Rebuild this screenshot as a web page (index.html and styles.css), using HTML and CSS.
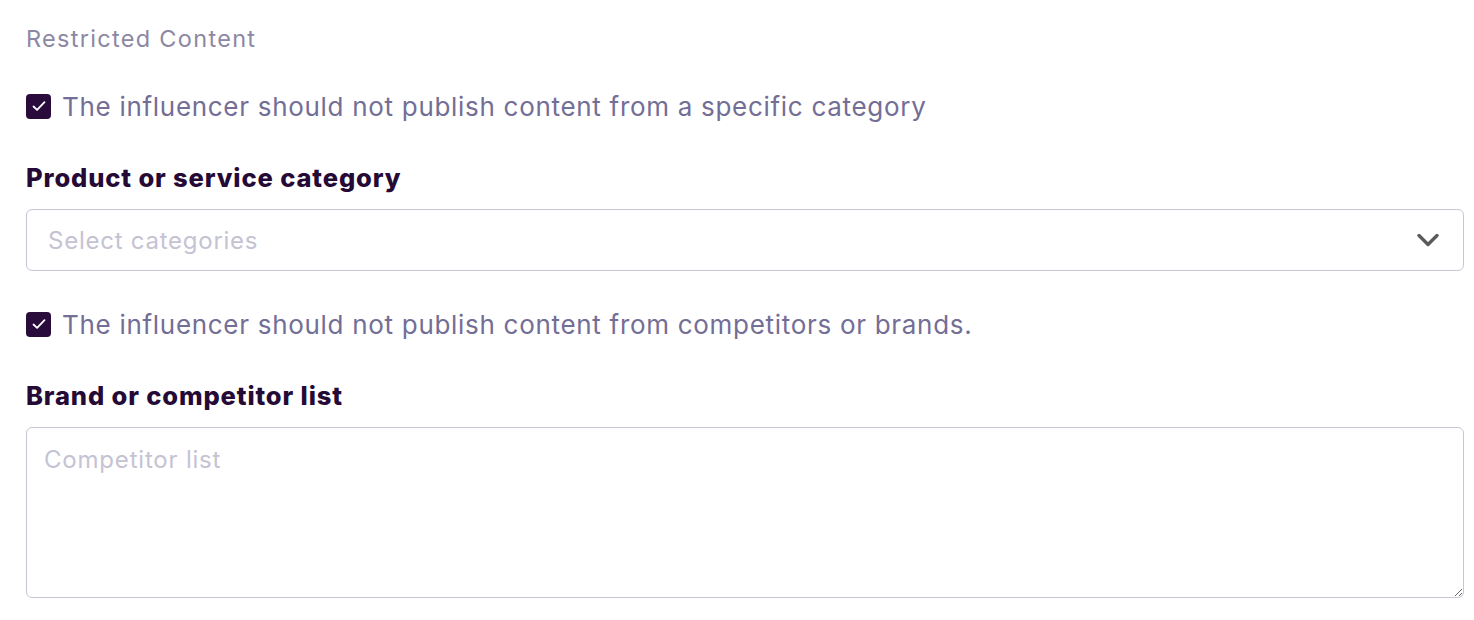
FILE: index.html
```html
<!DOCTYPE html>
<html>
<head>
<meta charset="utf-8">
<link rel="stylesheet" href="styles.css">
</head>
<body>
<div class="form">
  <div class="section-title">Restricted Content</div>
  <label class="check-row">
    <span class="box"><svg width="18" height="18" viewBox="0 0 18 18"><path d="M3.5 9.5l3.6 3.4L14.5 5.2" fill="none" stroke="#fff" stroke-width="1.8" stroke-linecap="round" stroke-linejoin="round"/></svg></span>
    <span class="check-text">The influencer should not publish content from a specific category</span>
  </label>
  <div class="field">
    <div class="field-label">Product or service category</div>
    <div class="select">
      <span class="placeholder">Select categories</span>
      <svg class="chev" width="24" height="14" viewBox="0 0 24 14"><path d="M3 2.5l9 9 9-9" fill="none" stroke="#5b5b5b" stroke-width="3.4" stroke-linecap="round" stroke-linejoin="round"/></svg>
    </div>
  </div>
  <label class="check-row">
    <span class="box"><svg width="18" height="18" viewBox="0 0 18 18"><path d="M3.5 9.5l3.6 3.4L14.5 5.2" fill="none" stroke="#fff" stroke-width="1.8" stroke-linecap="round" stroke-linejoin="round"/></svg></span>
    <span class="check-text">The influencer should not publish content from competitors or brands.</span>
  </label>
  <div class="field">
    <div class="field-label">Brand or competitor list</div>
    <textarea class="area" placeholder="Competitor list"></textarea>
  </div>
</div>
</body>
</html>
```
FILE: styles.css
```css
html, body {
  margin: 0;
  padding: 0;
  background: #fff;
  font-family: Inter, "Noto Sans", sans-serif;
}
.form {
  padding: 24px 10px 0 26px;
  display: flex;
  flex-direction: column;
}
.section-title {
  font-size: 23.5px;
  letter-spacing: 1.3px;
  line-height: 30px;
  color: #8c87a3;
  margin-bottom: 39px;
}
.check-row {
  display: flex;
  align-items: center;
  gap: 11px;
  height: 26px;
}
.box {
  width: 25px;
  height: 25px;
  border-radius: 4px;
  background: #2a0c3c;
  display: flex;
  align-items: center;
  justify-content: center;
  flex: none;
}
.check-text {
  font-size: 26px;
  letter-spacing: 0.7px;
  color: #736e96;
}
.field {
  display: flex;
  flex-direction: column;
  margin-top: 44px;
  margin-bottom: 40px;
}
.field-label {
  font-size: 25.5px;
  letter-spacing: 0.88px;
  font-weight: 800;
  color: #250a36;
  line-height: 30px;
  margin-bottom: 16px;
}
.select {
  height: 60px;
  border: 1px solid #c8c5d4;
  border-radius: 6px;
  display: flex;
  align-items: center;
  justify-content: space-between;
  padding: 0 23px 0 21px;
}
.placeholder {
  font-size: 24px;
  letter-spacing: 0.75px;
  color: #c5c3d3;
}
.area {
  border: 1px solid #c8c5d4;
  border-radius: 6px;
  padding: 17px 17px;
  box-sizing: border-box;
  height: 171px;
  font-family: Inter, "Noto Sans", sans-serif;
  font-size: 24px;
  letter-spacing: 0.8px;
  resize: vertical;
  outline: none;
}
.area::placeholder {
  color: #c5c3d3;
}
```
